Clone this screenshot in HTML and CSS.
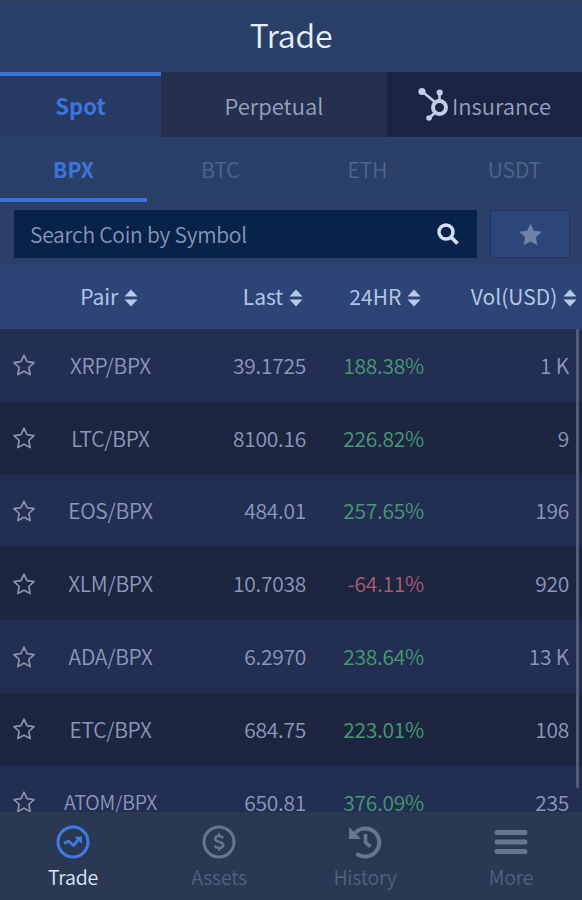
FILE: index.html
```html
<!DOCTYPE html>
<html lang="en">
<head>
    <meta charset="UTF-8">
    <meta name="viewport" content="width=device-width, initial-scale=1.0">
    <title>Trade</title>
    <link rel="stylesheet" href="styles.css">
</head>
<body>
    <!-- Shared icons -->
    <svg class="defs" width="0" height="0">
        <symbol id="star" viewBox="0 0 24 24">
            <path d="M12 2.2l3 6.5 7 .9-5.200 4.900 1.400 7.100L12 18.200l-6.200 3.400 1.400-7.100L2 9.600l7-.9z"/>
        </symbol>
        <symbol id="sort" viewBox="0 0 14 18">
            <path d="M7 .5l6.500 7H.5zM7 17.500l6.500-7H.5z"/>
        </symbol>
    </svg>

    <div class="app">
        <header class="header"><h1>Trade</h1></header>

        <div class="tabs">
            <div class="tab active">Spot</div>
            <div class="tab perpetual">Perpetual</div>
            <div class="tab insurance">
                <svg class="hub-icon" viewBox="0 0 32 34">
                    <g fill="none" stroke="#c3cde8">
                        <circle cx="21.500" cy="20.500" r="6.500" stroke-width="4"/>
                        <path d="M4 4.500l13 10.500M21.500 6v8M16.500 26l-5 5" stroke-width="2.500"/>
                    </g>
                    <g fill="#c3cde8">
                        <circle cx="4" cy="4.500" r="3.600"/>
                        <circle cx="21.700" cy="5.500" r="3.100"/>
                        <circle cx="11" cy="31" r="2.800"/>
                    </g>
                </svg>
                <span>Insurance</span>
            </div>
        </div>

        <div class="markets">
            <div class="market active">BPX</div>
            <div class="market">BTC</div>
            <div class="market">ETH</div>
            <div class="market">USDT</div>
        </div>

        <div class="search-bar">
            <div class="search">
                <span>Search Coin by Symbol</span>
                <svg class="search-icon" viewBox="0 0 22 22">
                    <circle cx="9" cy="9" r="7" fill="none" stroke="#d5dff5" stroke-width="3.400"/>
                    <path d="M14 14l6.500 6.500" stroke="#d5dff5" stroke-width="3.800"/>
                </svg>
            </div>
            <div class="favorites"><svg><use href="#star"/></svg></div>
        </div>

        <div class="row table-head">
            <div></div>
            <div class="pair">Pair <svg><use href="#sort"/></svg></div>
            <div class="last">Last <svg><use href="#sort"/></svg></div>
            <div class="change">24HR <svg><use href="#sort"/></svg></div>
            <div class="vol">Vol(USD) <svg><use href="#sort"/></svg></div>
        </div>

        <div class="list">
            <div class="row">
                <svg class="star"><use href="#star"/></svg>
                <div class="pair">XRP/BPX</div>
                <div class="last">39.1725</div>
                <div class="change up">188.38%</div>
                <div class="vol">1 K</div>
            </div>
            <div class="row">
                <svg class="star"><use href="#star"/></svg>
                <div class="pair">LTC/BPX</div>
                <div class="last">8100.16</div>
                <div class="change up">226.82%</div>
                <div class="vol">9</div>
            </div>
            <div class="row">
                <svg class="star"><use href="#star"/></svg>
                <div class="pair">EOS/BPX</div>
                <div class="last">484.01</div>
                <div class="change up">257.65%</div>
                <div class="vol">196</div>
            </div>
            <div class="row">
                <svg class="star"><use href="#star"/></svg>
                <div class="pair">XLM/BPX</div>
                <div class="last">10.7038</div>
                <div class="change down">-64.11%</div>
                <div class="vol">920</div>
            </div>
            <div class="row">
                <svg class="star"><use href="#star"/></svg>
                <div class="pair">ADA/BPX</div>
                <div class="last">6.2970</div>
                <div class="change up">238.64%</div>
                <div class="vol">13 K</div>
            </div>
            <div class="row">
                <svg class="star"><use href="#star"/></svg>
                <div class="pair">ETC/BPX</div>
                <div class="last">684.75</div>
                <div class="change up">223.01%</div>
                <div class="vol">108</div>
            </div>
            <div class="row">
                <svg class="star"><use href="#star"/></svg>
                <div class="pair long">ATOM/BPX</div>
                <div class="last">650.81</div>
                <div class="change up">376.09%</div>
                <div class="vol">235</div>
            </div>
            <div class="scrollbar"></div>
        </div>

        <nav class="nav">
            <div class="nav-item active">
                <svg viewBox="0 0 34 34" fill="none" stroke="currentColor">
                    <circle cx="17" cy="17" r="15" stroke-width="3"/>
                    <path d="M8 18.500l4.500-2.500 5 4.500 5.500-6.500" stroke-width="2.800" stroke-linejoin="round"/>
                    <path d="M18.500 12l7.500-.5v7.500z" fill="currentColor" stroke="none"/>
                </svg>
                <span>Trade</span>
            </div>
            <div class="nav-item">
                <svg viewBox="0 0 34 34" fill="none" stroke="currentColor">
                    <circle cx="17" cy="17" r="15" stroke-width="3"/>
                    <path d="M21 12.800c-1.200-1.300-2.600-1.800-4.200-1.800-2.200 0-3.700 1.100-3.700 2.800 0 4 8.200 2.200 8.200 6.300 0 1.800-1.600 2.900-4 2.900-2 0-3.600-.7-4.800-2.100M17 8.300V11M17 23v2.700" stroke-width="2.500"/>
                </svg>
                <span>Assets</span>
            </div>
            <div class="nav-item">
                <svg viewBox="0 0 34 34" fill="none" stroke="currentColor">
                    <path d="M7 8A14 14 0 1 1 8.500 28.500" stroke-width="4"/>
                    <path d="M1 2v12h12z" fill="currentColor" stroke="none"/>
                    <path d="M17.500 9v8.500l5 4" stroke-width="3.600"/>
                </svg>
                <span>History</span>
            </div>
            <div class="nav-item">
                <svg viewBox="0 0 34 34" fill="none" stroke="currentColor" stroke-width="5" stroke-linecap="round">
                    <path d="M3 7.500h28M3 17h28M3 26.500h28"/>
                </svg>
                <span>More</span>
            </div>
        </nav>
    </div>
</body>
</html>
```
FILE: styles.css
```css
* {
    box-sizing: border-box;
}
body {
    margin: 0;
    font-family: "Noto Sans CJK SC", "Noto Sans", sans-serif;
    font-size: 21px;
    font-weight: 350;
    line-height: 30px;
    color: #8c98ba;
    background: #2a3854;
}
.defs {
    position: absolute;
}
.app {
    display: flex;
    flex-direction: column;
    width: 582px;
    height: 900px;
    overflow: hidden;
    background: #2b4069;
}
.header {
    height: 72px;
    display: flex;
    align-items: center;
    justify-content: center;
    padding-bottom: 7px;
    border-top: 3px solid #2e405f;
}
h1 {
    margin: 0;
    font-size: 32px;
    font-weight: 350;
    letter-spacing: -0.2px;
    color: #e6f0fc;
}
.tabs {
    display: grid;
    grid-template-columns: 161px 226px 195px;
    height: 65px;
}
.tab {
    display: flex;
    align-items: center;
    justify-content: center;
    font-size: 22px;
    color: #98a2bd;
}
.tab.active {
    padding-bottom: 4px;
    border-top: 4px solid #3a73d9;
    background: #263a64;
    color: #3e74dc;
    font-weight: 700;
}
.tab.perpetual {
    background: #25304f;
}
.tab.insurance {
    background: #1b2443;
}
.hub-icon {
    width: 32px;
    height: 34px;
    margin-right: 2px;
    margin-top: -1px;
}
.markets {
    display: grid;
    grid-template-columns: repeat(4, 147px);
    height: 65px;
}
.market {
    display: flex;
    align-items: center;
    justify-content: center;
    padding-top: 3px;
    border-bottom: 4px solid transparent;
    color: #50658c;
}
.market.active {
    border-color: #3f74dc;
    color: #3e74dc;
    font-weight: 700;
}
.search-bar {
    display: flex;
    gap: 13px;
    height: 63px;
    padding: 8px 12px 7px 14px;
    background: #2b3f68;
}
.search {
    flex: 1;
    display: flex;
    align-items: center;
    justify-content: space-between;
    padding: 0 18px 0 16px;
    background: #07234a;
    color: #8796ba;
    letter-spacing: -0.25px;
}
.search-icon {
    width: 22px;
    height: 22px;
}
.favorites {
    width: 80px;
    display: flex;
    align-items: center;
    justify-content: center;
    border: 1px solid #213560;
    background: #2c467b;
}
.favorites svg {
    width: 27px;
    height: 27px;
    fill: #6f83a5;
}
.row {
    display: grid;
    grid-template-columns: 48px 125px 133px 118px 145px;
    align-items: center;
    height: 72.8px;
    background: #222e52;
    letter-spacing: -0.25px;
}
.row:nth-child(even) {
    background: #1c2640;
}
.pair,
.last,
.change,
.vol {
    padding-bottom: 1px;
    text-align: right;
}
.pair {
    text-align: center;
}
.pair.long {
    font-size: 19.5px;
}
.table-head,
.table-head:nth-child(even) {
    height: 64px;
    grid-template-columns: 48px 122px 133px 118px 156px;
    background: #2c4476;
    color: #b5c4e4;
    font-weight: 400;
    letter-spacing: 0;
}
.table-head > div {
    padding-bottom: 2px;
}
.table-head svg {
    width: 14px;
    height: 18px;
    margin-left: 1px;
    vertical-align: -2px;
    fill: #b9c8e8;
}
.list {
    position: relative;
    height: 483px;
    overflow: hidden;
}
.star {
    width: 24px;
    height: 24px;
    margin-left: 12px;
    fill: none;
    stroke: #8a93a8;
    stroke-width: 1.7;
    stroke-linejoin: round;
}
.row .up {
    color: #479a70;
}
.row .down {
    color: #b05a70;
}
.scrollbar {
    position: absolute;
    top: 0;
    right: 3px;
    width: 3px;
    height: 459px;
    background: #555b75;
}
.nav {
    display: grid;
    grid-template-columns: repeat(4, 146px);
    height: 88px;
    background: #2a3854;
    color: #66768f;
    font-size: 19.5px;
    letter-spacing: -0.2px;
}
.nav-item {
    display: flex;
    flex-direction: column;
    align-items: center;
    padding-top: 13px;
}
.nav-item svg {
    width: 34px;
    height: 34px;
    margin-bottom: 3px;
}
.nav-item.active svg {
    color: #3f7be0;
}
.nav-item span {
    color: #53617d;
}
.nav-item.active span {
    color: #dce6f5;
}
```
